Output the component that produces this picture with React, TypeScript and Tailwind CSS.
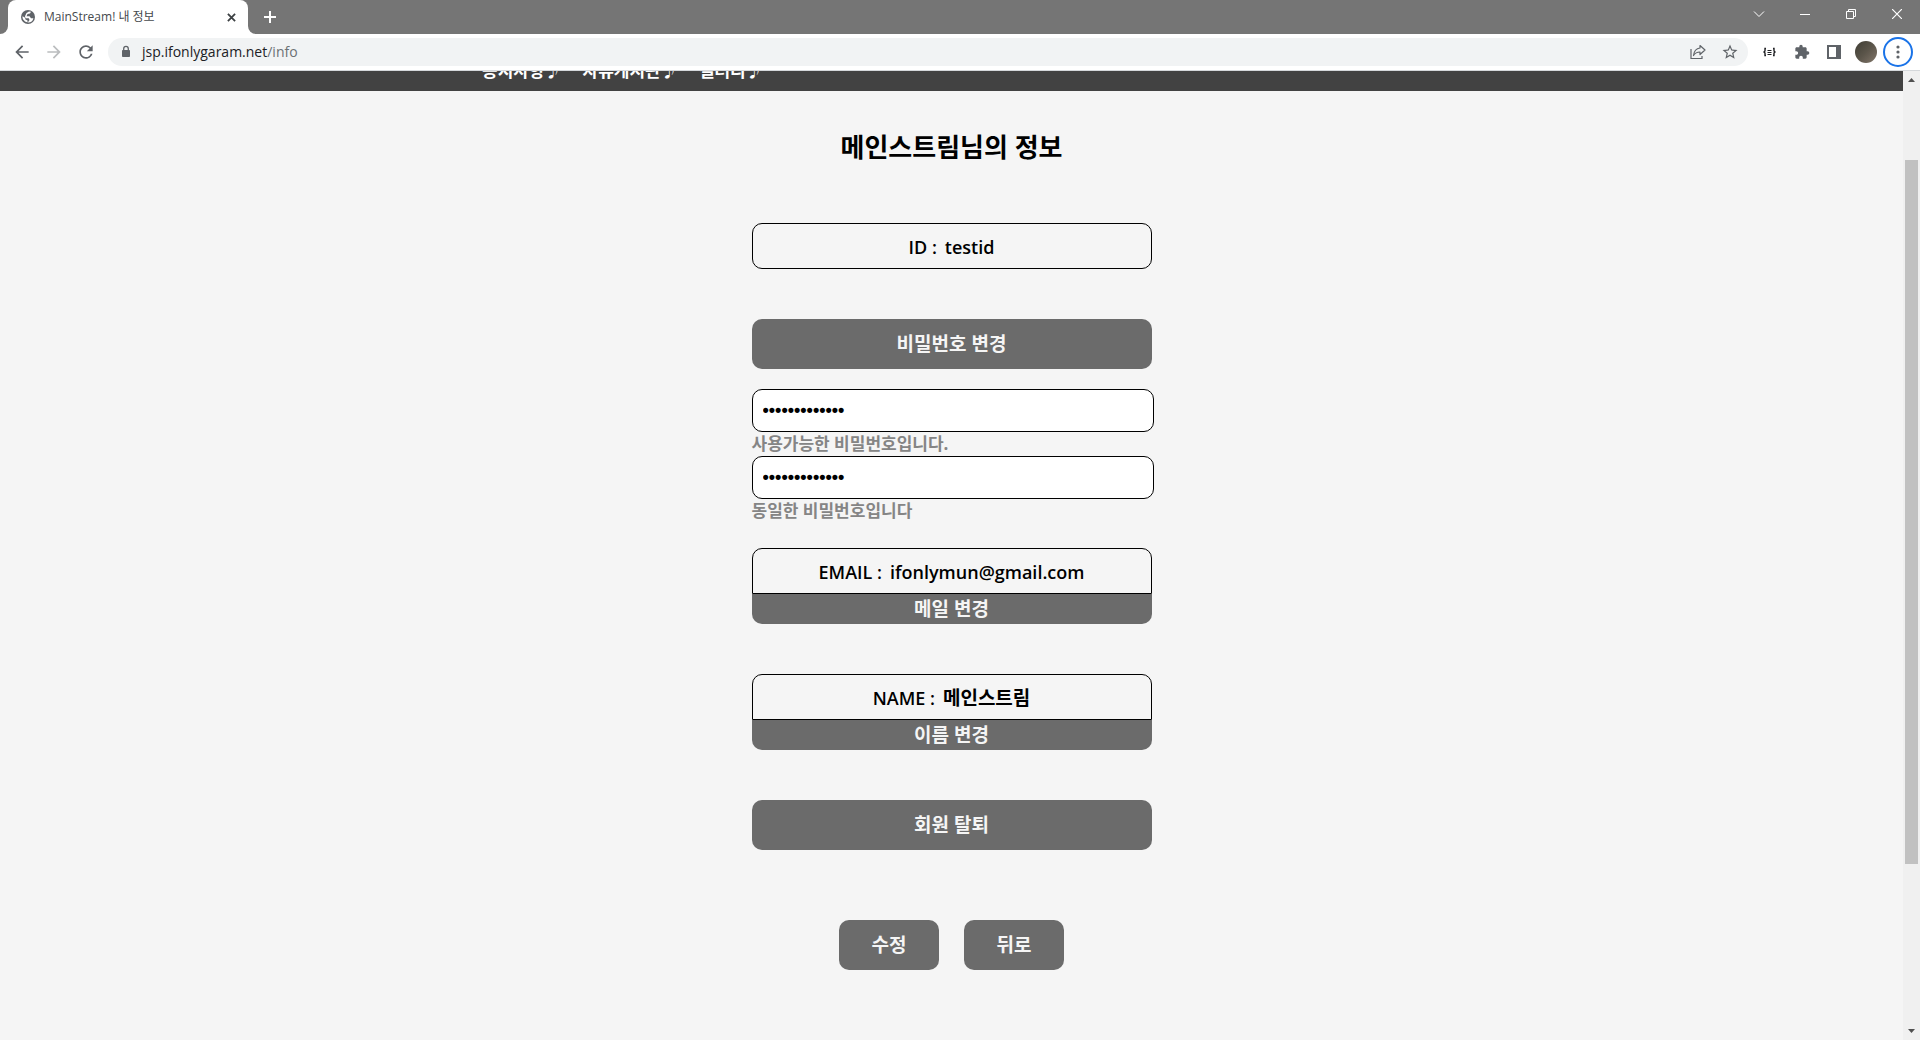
import React from "react";
import { MdArrowBack, MdArrowForward, MdRefresh, MdExtension, MdStarBorder } from "react-icons/md";

const ui = "font-['Open_Sans','Noto_Sans_CJK_KR',sans-serif]";

function BrowserChrome() {
  return (
    <header className="shrink-0">
      <div className="flex h-[34px] items-stretch justify-between bg-[#757575]">
        <div className="flex items-stretch">
          <div className="w-2 bg-white">
            <div className="h-full rounded-br-lg bg-[#757575]" />
          </div>
          <div className="flex w-60 items-center rounded-t-lg bg-white pr-[10px] pl-[12px]">
            <svg viewBox="0 0 16 16" className="size-4 shrink-0">
              <circle cx="8" cy="8" r="7" fill="#5f6368" />
              <path
                d="M11 2.800L10 4.500 7.500 5 6.500 7.200H9.500L11 9.200H13.400A5.600 5.600 0 0 1 7.500 13.500V11.500L5.500 10.500 4.800 8.500 2.500 7.300A5.600 5.600 0 0 0 3 10.300L5 12.600 7.800 13.600 9.500 11 8.800 9.300H5.500L5 7.300 6.500 4 9 2.400z"
                fill="white"
              />
            </svg>
            <span className="ml-2 flex-1 truncate text-xs text-[#45494d]">MainStream! 내 정보</span>
            <button aria-label="탭 닫기" className="p-[2px]">
              <svg viewBox="0 0 10 10" className="size-[9px]" stroke="#3c4043" strokeWidth="2">
                <path d="M1 1l8 8M9 1l-8 8" />
              </svg>
            </button>
          </div>
          <div className="w-2 bg-white">
            <div className="h-full rounded-bl-lg bg-[#757575]" />
          </div>
          <button aria-label="새 탭" className="px-2">
            <svg viewBox="0 0 12 12" className="size-3" stroke="white" strokeWidth="2">
              <path d="M6 0v12M0 6h12" />
            </svg>
          </button>
        </div>
        <div className="flex h-7 items-center text-white">
          <button aria-label="탭 검색" className="flex w-[46px] justify-center">
            <svg viewBox="0 0 12 12" className="size-3" fill="none" stroke="currentColor">
              <path d="M1 3.5l5 5 5-5" />
            </svg>
          </button>
          <button aria-label="최소화" className="flex w-[46px] justify-center">
            <svg viewBox="0 0 10 10" className="size-[10px]" stroke="currentColor">
              <path d="M0 5.5h10" />
            </svg>
          </button>
          <button aria-label="이전 크기로 복원" className="flex w-[46px] justify-center">
            <svg viewBox="0 0 10 10" className="size-[10px]" fill="none" stroke="currentColor">
              <path d="M.5 2.5h7v7h-7zM2.5 2.5v-2h7v7h-2" />
            </svg>
          </button>
          <button aria-label="닫기" className="flex w-[46px] justify-center">
            <svg viewBox="0 0 10 10" className="size-[10px]" stroke="currentColor" strokeWidth="1.2">
              <path d="M0 0l10 10M10 0L0 10" />
            </svg>
          </button>
        </div>
      </div>
      <div className="flex h-[37px] items-center border-b border-[#d5d8db] bg-white text-[#5f6368]">
        <button aria-label="뒤로" className="ml-3">
          <MdArrowBack className="size-5" />
        </button>
        <button aria-label="앞으로" className="ml-3 text-[#bbbdbf]">
          <MdArrowForward className="size-5" />
        </button>
        <button aria-label="새로고침" className="ml-3">
          <MdRefresh className="size-5" />
        </button>
        <div className="ml-3 flex h-7 flex-1 items-center rounded-full bg-[#f1f3f4] pr-[9px] pl-[11px]">
          <svg viewBox="0 0 14 14" className="size-[14px]">
            <path d="M3.500 5.500h7v6h-7z" fill="#5f6368" stroke="#5f6368" strokeLinejoin="round" />
            <path d="M4.700 5V3.700a2.300 2.300 0 0 1 4.600 0V5" fill="none" stroke="#5f6368" strokeWidth="1.300" />
          </svg>
          <a href="#info" className="ml-[9px] flex-1 text-sm text-[#202124]">
            jsp.ifonlygaram.net<span className="text-[#6c7074]">/info</span>
          </a>
          <button aria-label="공유" className="mr-[15px]">
            <svg viewBox="0 0 16 16" className="size-4" fill="none" stroke="currentColor" strokeWidth="1.2">
              <path d="M1 5v9.500h11V12" />
              <path d="M10 1.500L15 6l-5 4.500V8C7 8 5 9 3.500 11.500 4 7 6.500 4.500 10 4z" strokeLinejoin="round" />
            </svg>
          </button>
          <button aria-label="북마크">
            <MdStarBorder className="size-[18px]" />
          </button>
        </div>
        <button aria-label="JSON 확장" className="ml-[15px]">
          <svg viewBox="0 0 13 10" className="h-[10px] w-[13px]" fill="none" stroke="#202124" strokeWidth="1.400">
            <path d="M3 1.500H2v2.500L1 5l1 1v2.500h1M10 1.500h1v2.500l1 1-1 1v2.500h-1" />
            <path d="M4.500 3.500h4M4.500 5.500h4M4.500 7.500h4" strokeWidth="1" />
          </svg>
        </button>
        <button aria-label="확장 프로그램" className="ml-[18px]">
          <MdExtension className="size-4" />
        </button>
        <button aria-label="측면 패널" className="ml-[17px]">
          <svg viewBox="0 0 14 14" className="size-[14px]">
            <path d="M0 0h14v14H0zM2 2v10h7V2z" fill="#5f6368" fillRule="evenodd" />
          </svg>
        </button>
        <button aria-label="프로필" className="ml-[14px] size-[22px] rounded-full bg-linear-to-br from-[#3f3d34] via-[#5b554a] to-[#83776b]" />
        <button aria-label="메뉴" className="mr-[7px] ml-[6px] flex size-[30px] items-center justify-center rounded-full border-2 border-[#1a73e8]">
          <svg viewBox="0 0 4 14" className="h-[14px] w-1" fill="#5f6368">
            <circle cx="2" cy="2" r="1.600" />
            <circle cx="2" cy="7" r="1.600" />
            <circle cx="2" cy="12" r="1.600" />
          </svg>
        </button>
      </div>
    </header>
  );
}

function Nav() {
  return (
    <nav className="flex h-5 items-end gap-[21px] overflow-hidden bg-[#424242] pb-2 pl-[482px] text-[17px] leading-6 font-bold text-white">
      <a href="#notice">공지사항♪</a>
      <a href="#board">자유게시판♪</a>
      <a href="#gallery">갤러리♪</a>
    </nav>
  );
}

const box = "flex h-[46px] items-center justify-center gap-2 border border-black pt-px text-lg font-semibold";
const action = "block w-full bg-[#6b6b6b] text-[19px] font-bold text-[#f5f5f5]";
const field = "block h-[43px] w-[402px] rounded-[10px] border border-black bg-white px-[10px] font-['Liberation_Sans',sans-serif] text-lg text-black";

function InfoCard({ label, button, children }: { label: string; button: string; children: React.ReactNode }) {
  return (
    <section className="mb-[50px]">
      <div className={`${box} rounded-t-[10px]`}>
        <span>{label} :</span>
        {children}
      </div>
      <button className={`${action} h-[30px] rounded-b-[10px] leading-[30px]`}>{button}</button>
    </section>
  );
}

function Scrollbar() {
  return (
    <div className="flex w-[17px] shrink-0 flex-col items-center justify-between bg-[#f0f0f0]" aria-hidden="true">
      <svg viewBox="0 0 17 17" className="size-[17px]" fill="#505050">
        <path d="M5 11h7L8.500 7z" />
      </svg>
      <div className="flex w-full flex-1 flex-col items-center">
        <div className="flex-[72]" />
        <div className="w-[13px] flex-[704] bg-[#c1c1c1]" />
        <div className="flex-[159]" />
      </div>
      <svg viewBox="0 0 17 17" className="size-[17px]" fill="#505050">
        <path d="M5 6h7L8.500 10z" />
      </svg>
    </div>
  );
}

export default function App() {
  return (
    <div className={`${ui} flex h-screen flex-col`} lang="ko">
      <BrowserChrome />
      <div className="flex min-h-0 flex-1">
        <div className="min-w-0 flex-1 overflow-hidden bg-[#f5f5f5] text-black">
          <Nav />
          <main className="mx-auto w-[400px]">
            <h1 className="pt-[37px] text-center text-[26px] leading-[38px] font-bold">메인스트림님의 정보</h1>
            <div className={`${box} mt-[57px] mb-[50px] rounded-[10px]`}>
              <span>ID :</span>
              <span>testid</span>
            </div>
            <button className={`${action} h-[50px] rounded-[10px]`}>비밀번호 변경</button>
            <form className="mt-5 mb-[25px] text-[17px] leading-6 font-bold text-[#858585]">
              <input type="password" aria-label="새 비밀번호" defaultValue="mainstream123" className={field} />
              <p>사용가능한 비밀번호입니다.</p>
              <input type="password" aria-label="비밀번호 확인" defaultValue="mainstream123" className={field} />
              <p>동일한 비밀번호입니다</p>
            </form>
            <InfoCard label="EMAIL" button="메일 변경">
              <span>ifonlymun@gmail.com</span>
            </InfoCard>
            <InfoCard label="NAME" button="이름 변경">
              <span className="text-[19px] leading-7">메인스트림</span>
            </InfoCard>
            <button className={`${action} h-[50px] rounded-[10px]`}>회원 탈퇴</button>
            <div className="mt-[70px] flex justify-center gap-[25px]">
              <button className={`${action} h-[50px] max-w-[100px] rounded-[10px]`}>수정</button>
              <button className={`${action} h-[50px] max-w-[100px] rounded-[10px]`}>뒤로</button>
            </div>
          </main>
        </div>
        <Scrollbar />
      </div>
    </div>
  );
}
